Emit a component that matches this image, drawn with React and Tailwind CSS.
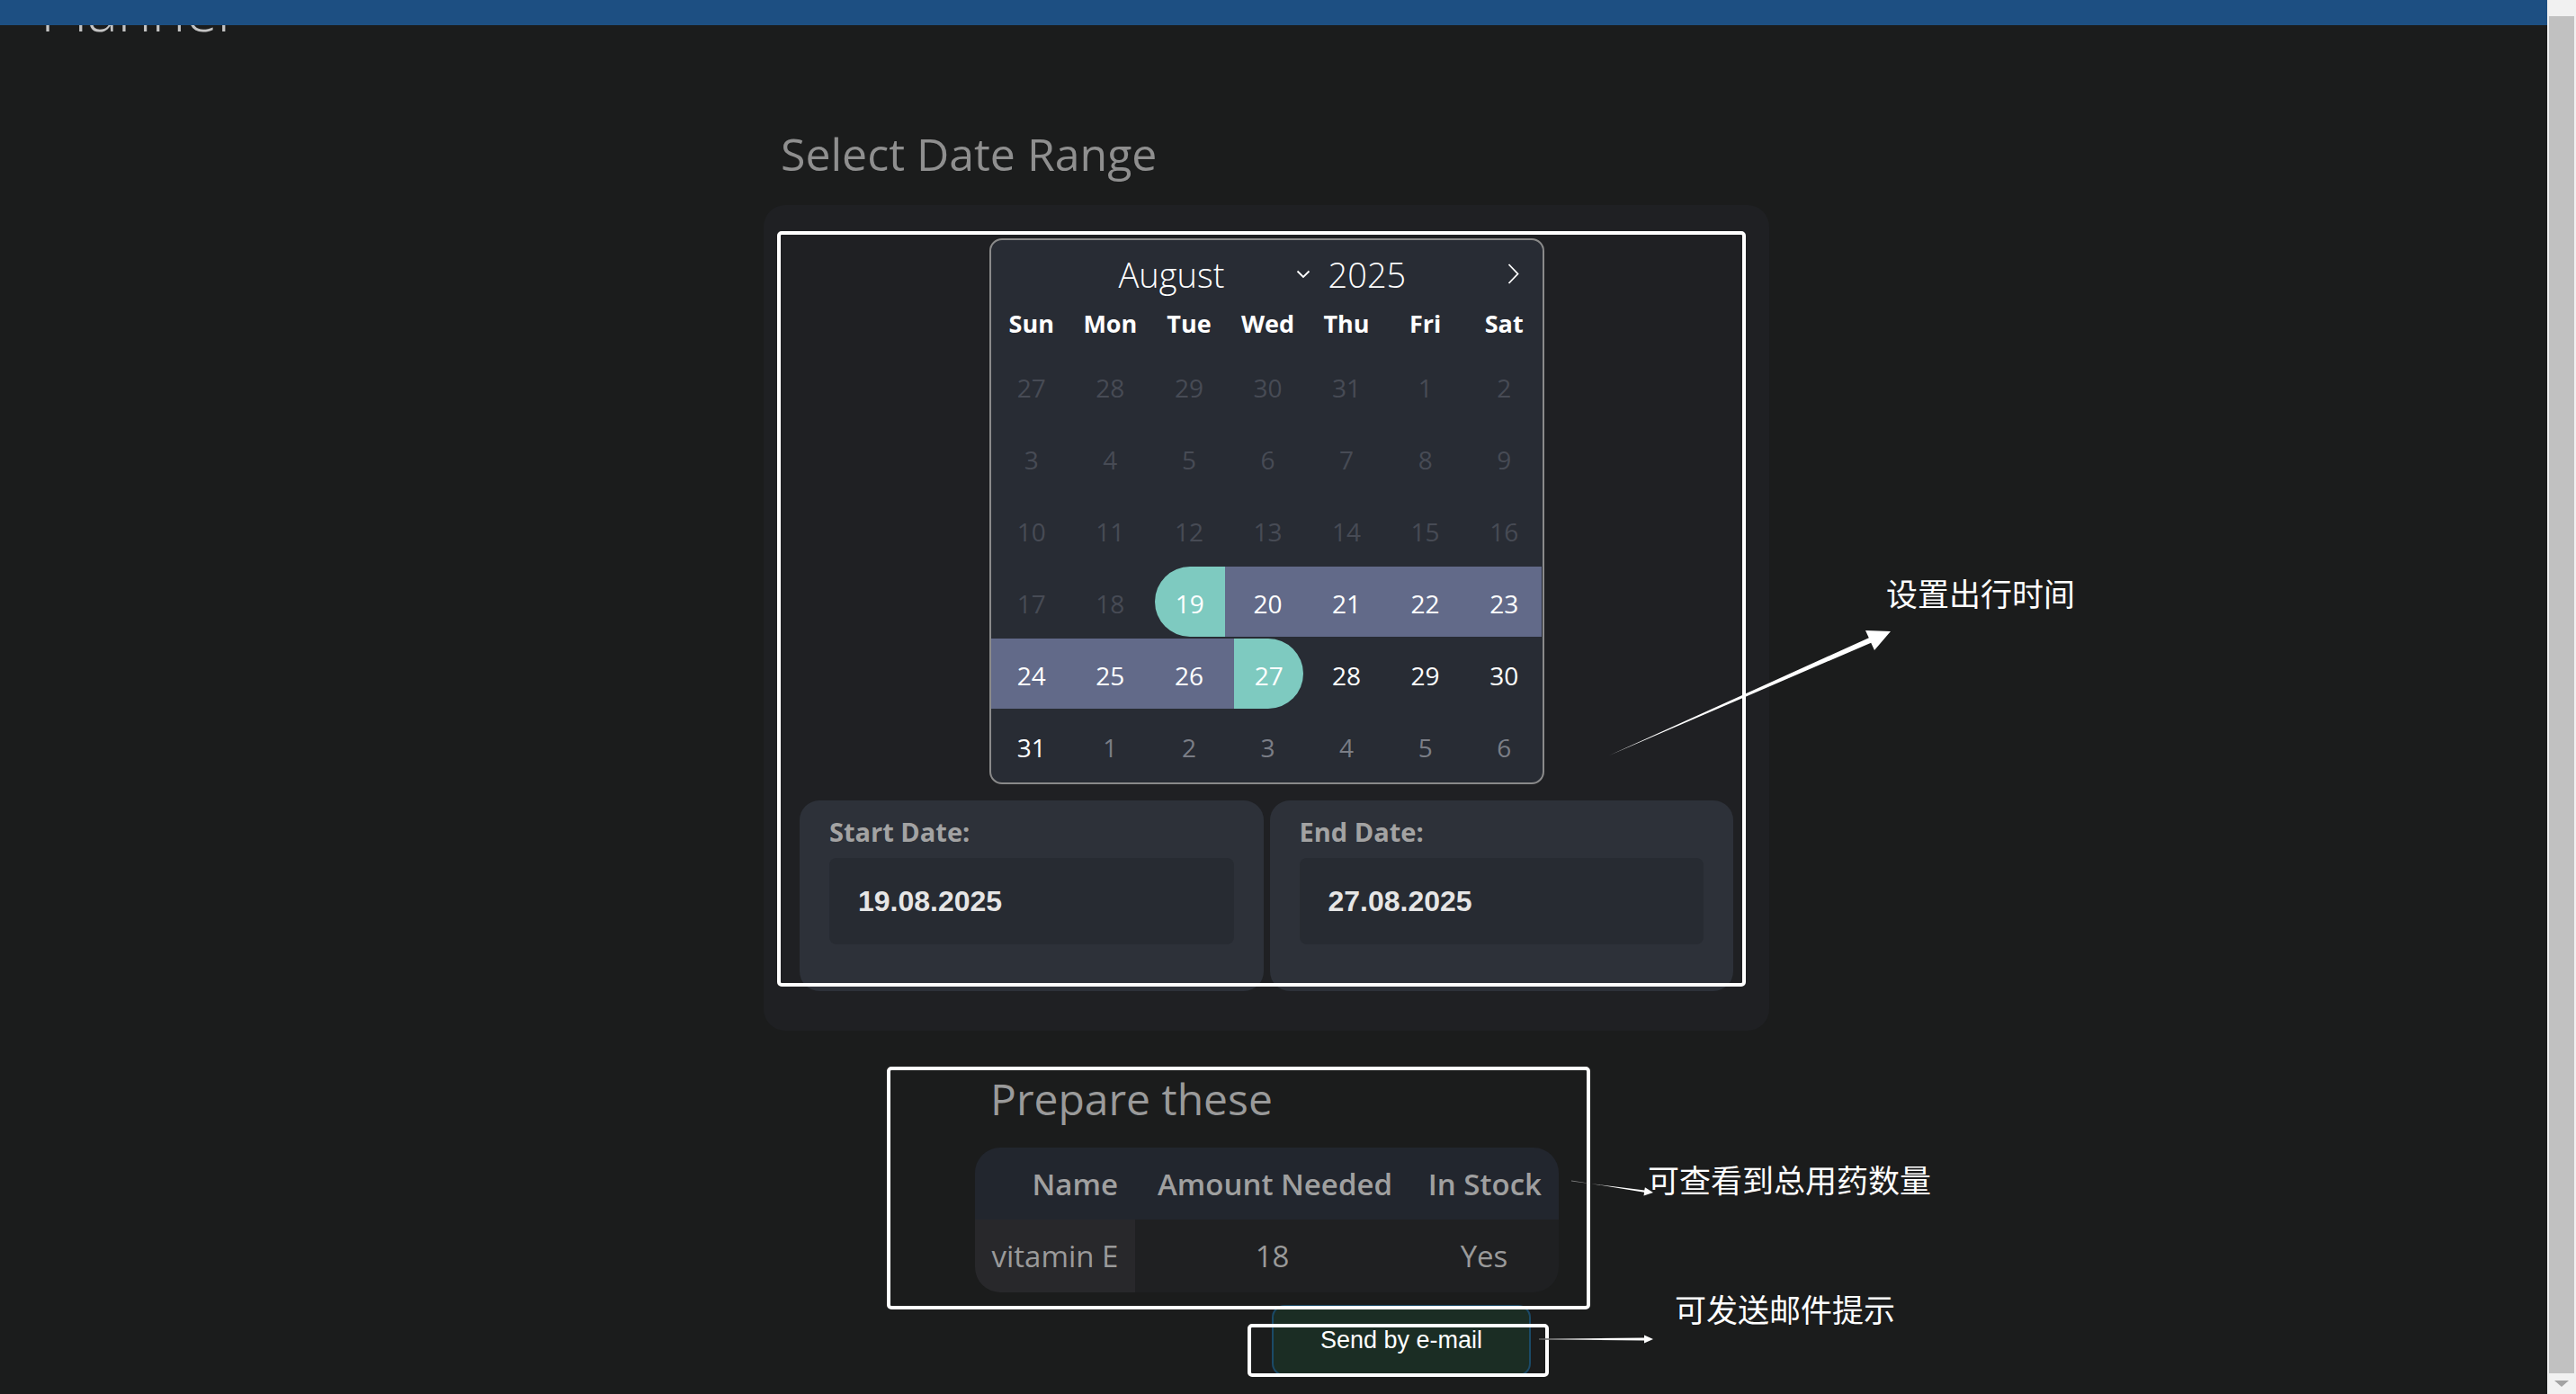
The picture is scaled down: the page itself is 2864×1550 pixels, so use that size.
import React from "react";

const DIM = "text-[#474b55]";
const OUT = "text-[#7b7e86]";

const rows = [
  [[27, "d"], [28, "d"], [29, "d"], [30, "d"], [31, "d"], [1, "d"], [2, "d"]],
  [[3, "d"], [4, "d"], [5, "d"], [6, "d"], [7, "d"], [8, "d"], [9, "d"]],
  [[10, "d"], [11, "d"], [12, "d"], [13, "d"], [14, "d"], [15, "d"], [16, "d"]],
  [[17, "d"], [18, "d"], [19, "s"], [20, "m"], [21, "m"], [22, "m"], [23, "m"]],
  [[24, "m"], [25, "m"], [26, "m"], [27, "e"], [28, "n"], [29, "n"], [30, "n"]],
  [[31, "n"], [1, "o"], [2, "o"], [3, "o"], [4, "o"], [5, "o"], [6, "o"]],
];

function Cell({ v, t }) {
  if (t === "s") {
    return (
      <div className="flex h-[78px] items-stretch">
        <div className="w-[7px]" />
        <div className="flex w-[78px] items-center justify-center rounded-l-full bg-[#7ecac0] pt-[3px] text-white">{v}</div>
        <div className="flex-1 bg-[#626a89]" />
      </div>
    );
  }
  if (t === "e") {
    return (
      <div className="flex h-[78px] items-stretch">
        <div className="w-[8px] bg-[#626a89]" />
        <div className="flex w-[77px] items-center justify-center rounded-r-full bg-[#7ecac0] pt-[3px] text-white">{v}</div>
        <div className="flex-1" />
      </div>
    );
  }
  if (t === "m") {
    return <div className="flex h-[78px] items-center justify-center bg-[#626a89] pl-[3px] pt-[3px] text-white">{v}</div>;
  }
  const c = t === "d" ? DIM : t === "o" ? OUT : "text-white";
  return <div className={`flex h-[78px] items-center justify-center pl-[3px] pt-[3px] ${c}`}>{v}</div>;
}

function Calendar() {
  return (
    <div className="mx-auto w-[617px] overflow-hidden rounded-[14px] border-2 border-[#8a8a8a] bg-[#282c34]">
      <div className="flex h-[75px] items-center pl-[142px] pr-[26px] text-[38px] font-light leading-none text-white">
        <span className="w-[197px]">August</span>
        <svg width="16" height="10" viewBox="0 0 16 10" className="shrink-0">
          <path d="M1.5 1.5 L8 8 L14.5 1.5" fill="none" stroke="#ffffff" strokeWidth="1.8" />
        </svg>
        <span className="ml-[20px]">2025</span>
        <svg width="13" height="23" viewBox="0 0 13 23" className="ml-auto shrink-0">
          <path d="M1.5 1 L11.5 11.5 L1.5 22" fill="none" stroke="#ffffff" strokeWidth="1.8" />
        </svg>
      </div>
      <div className="grid h-[48px] grid-cols-7 items-start text-center text-[27px] font-bold leading-none text-white">
        {["Sun", "Mon", "Tue", "Wed", "Thu", "Fri", "Sat"].map((d) => (
          <div key={d} className="pl-[3px] pt-[4px]">{d}</div>
        ))}
      </div>
      {rows.map((r, i) => (
        <div key={i} className="grid h-[80px] grid-cols-7 text-[28px] leading-none">
          {r.map(([v, t], j) => (
            <Cell key={j} v={v} t={t} />
          ))}
        </div>
      ))}
    </div>
  );
}

function DateCard({ label, value }) {
  return (
    <div className="rounded-[22px] bg-[#2d3139] px-[33px] pb-[52px] pt-[20px]">
      <div className="text-[29px] font-bold leading-none text-[#a3a3a3]">{label}</div>
      <div className="mt-[15px] flex h-[96px] items-center rounded-[8px] bg-[#272b32] pl-[32px] font-['Liberation_Sans',Arial,sans-serif] text-[32px] font-bold text-[#e6e6e6]">
        {value}
      </div>
    </div>
  );
}

function Frame({ cls }) {
  return <div className={`pointer-events-none absolute rounded-[5px] border-[4px] border-white ${cls}`} />;
}

export default function App() {
  return (
    <div className="flex h-[1550px] w-[2864px] overflow-hidden bg-[#1b1c1c] font-['Open_Sans','Noto_Sans_CJK_SC',sans-serif]">
      <div className="relative w-[2832px] shrink-0">
        <div className="relative z-10 h-[28px] bg-[#1d4f82]" />
        <div className="-mt-[49px] ml-[45px] text-[64px] font-light leading-none text-[#c4c4c4]">Planner</div>

        <div className="ml-[849px] w-[1118px]">
          <h2 className="ml-[19px] mt-[103px] text-[50px] font-normal leading-none text-[#8f8f8f]">Select Date Range</h2>

          <div className="mt-[32px] rounded-[24px] bg-[#1f2023] px-[40px] pb-[44px] pt-[37px]">
            <Calendar />
            <div className="mt-[18px] grid grid-cols-2 gap-[7px]">
              <DateCard label="Start Date:" value="19.08.2025" />
              <DateCard label="End Date:" value="27.08.2025" />
            </div>
          </div>

          <div className="ml-[235px]">
            <h2 className="ml-[17px] mt-[52px] text-[48px] font-normal leading-none text-[#9a9a9a]">Prepare these</h2>
            <div className="mt-[30px] inline-block overflow-hidden rounded-[28px]">
              <table className="table-fixed border-separate border-spacing-0 text-[33px] leading-none">
                <thead>
                  <tr className="bg-[#22262e]">
                    <th className="h-[80px] w-[178px] whitespace-nowrap px-[19px] text-right font-semibold text-[#a0a0a0]">Name</th>
                    <th className="h-[80px] w-[305px] whitespace-nowrap px-[19px] text-right font-semibold text-[#a0a0a0]">Amount Needed</th>
                    <th className="h-[80px] w-[166px] whitespace-nowrap px-[19px] text-right font-semibold text-[#a0a0a0]">In Stock</th>
                  </tr>
                </thead>
                <tbody>
                  <tr>
                    <td className="h-[81px] whitespace-nowrap bg-[#28282b] px-[10px] text-center text-[#9a9a9a]">vitamin E</td>
                    <td className="h-[81px] bg-[#1f2022] text-center text-[#9a9a9a]">18</td>
                    <td className="h-[81px] bg-[#1f2022] text-center text-[#9a9a9a]">Yes</td>
                  </tr>
                </tbody>
              </table>
            </div>
            <button className="ml-[330px] mt-[8px] block h-[79px] w-[288px] rounded-[14px] border-2 border-[#1b4a67] bg-[#1b2d24] font-['Liberation_Sans',Arial,sans-serif] text-[27px] text-white">
              Send by e-mail
            </button>
          </div>
        </div>

        {/* annotation overlays */}
        <Frame cls="left-[864px] top-[257px] h-[840px] w-[1077px]" />
        <Frame cls="left-[986px] top-[1186px] h-[270px] w-[782px]" />
        <Frame cls="left-[1387px] top-[1472px] h-[59px] w-[335px]" />

        <div className="absolute left-[2097px] top-[636px] font-['Noto_Sans_CJK_SC',sans-serif] text-[35px] leading-[46px] text-white">设置出行时间</div>
        <div className="absolute left-[1832px] top-[1288px] font-['Noto_Sans_CJK_SC',sans-serif] text-[35px] leading-[46px] text-white">可查看到总用药数量</div>
        <div className="absolute left-[1862px] top-[1432px] font-['Noto_Sans_CJK_SC',sans-serif] text-[35px] leading-[46px] text-white">可发送邮件提示</div>

        <svg className="pointer-events-none absolute left-0 top-0" width="2832" height="1550" viewBox="0 0 2832 1550">
          <defs>
            <linearGradient id="g3" x1="0" y1="0" x2="1" y2="0">
              <stop offset="0" stopColor="#5a5a5a" />
              <stop offset="0.6" stopColor="#ffffff" />
            </linearGradient>
            <linearGradient id="g2" x1="0" y1="0" x2="1" y2="0">
              <stop offset="0" stopColor="#777777" />
              <stop offset="0.5" stopColor="#ffffff" />
            </linearGradient>
          </defs>
          <polygon
            fill="#ffffff"
            points="1789,840 2080.2,714.7 2084,723 2102,702 2074,701 2077.8,709.3"
          />
          <polygon
            fill="url(#g2)"
            points="1747,1312.5 1828.1,1325.8 1827.5,1329.6 1838,1326 1828.9,1320.2 1828.3,1323.6 1747,1313.5"
          />
          <polygon fill="url(#g3)" points="1711,1488.3 1828,1487.6 1828,1484.5 1838,1489 1828,1493.5 1828,1490.4 1711,1489.7" />
        </svg>
      </div>

      {/* scrollbar */}
      <div className="flex w-[32px] shrink-0 flex-col bg-[#f1f1f1]">
        <div className="mx-[2px] mt-[18px] h-[1509px] bg-[#c1c1c1]" />
        <div className="flex flex-1 items-center justify-center">
          <svg width="16" height="8" viewBox="0 0 16 8">
            <polygon points="0,0 16,0 8,7" fill="#a3a3a3" />
          </svg>
        </div>
      </div>
    </div>
  );
}
